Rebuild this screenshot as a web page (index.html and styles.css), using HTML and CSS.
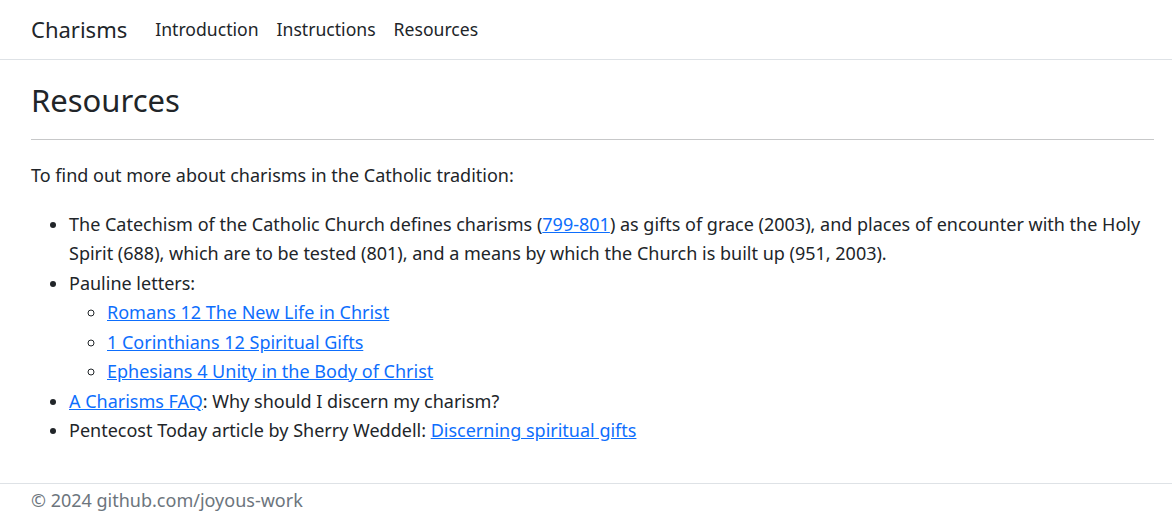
FILE: index.html
```html
<!DOCTYPE html>
<html lang="en">
<head>
<meta charset="utf-8">
<title>Charisms - Resources</title>
<link rel="stylesheet" href="styles.css">
</head>
<body>
<header class="navbar">
  <a class="brand" href="#">Charisms</a>
  <nav class="nav">
    <a class="nav-link" href="#">Introduction</a>
    <a class="nav-link" href="#">Instructions</a>
    <a class="nav-link" href="#">Resources</a>
  </nav>
</header>
<main class="content">
  <h1 class="title">Resources</h1>
  <hr class="rule">
  <p class="intro">To find out more about charisms in the Catholic tradition:</p>
  <ul class="list">
    <li>The Catechism of the Catholic Church defines charisms (<a href="#">799-801</a>) as gifts of grace (2003), and places of encounter with the Holy Spirit (688), which are to be tested (801), and a means by which the Church is built up (951, 2003).</li>
    <li>Pauline letters:
      <ul class="sublist">
        <li><a href="#">Romans 12 The New Life in Christ</a></li>
        <li><a href="#">1 Corinthians 12 Spiritual Gifts</a></li>
        <li><a href="#">Ephesians 4 Unity in the Body of Christ</a></li>
      </ul>
    </li>
    <li><a href="#">A Charisms FAQ</a>: Why should I discern my charism?</li>
    <li>Pentecost Today article by Sherry Weddell: <a href="#">Discerning spiritual gifts</a></li>
  </ul>
</main>
<footer class="footer">© 2024 github.com/joyous-work</footer>
</body>
</html>
```
FILE: styles.css
```css
html, body {
  margin: 0;
  padding: 0;
}
body {
  font-family: "Noto Sans", "Open Sans", sans-serif;
  font-size: 18px;
  line-height: 1.64;
  color: #212529;
  background: #fff;
}
a {
  color: #0d6efd;
}
.navbar {
  display: flex;
  align-items: center;
  height: 60px;
  box-sizing: border-box;
  border-bottom: 1px solid #dee2e6;
  padding: 0 31px;
}
.brand {
  font-size: 22px;
  color: #212529;
  text-decoration: none;
  margin-right: 28px;
}
.nav {
  display: flex;
  gap: 18px;
}
.nav-link {
  color: #212529;
  text-decoration: none;
  font-size: 17.6px;
}
.content {
  padding: 20px 18px 19px 31px;
}
.title {
  font-size: 31px;
  font-weight: 400;
  line-height: 41px;
  margin: 0 0 18px;
}
.rule {
  border: 0;
  border-top: 1px solid #c7c8c9;
  margin: 0 0 21px;
}
.intro {
  margin: 0 0 19px;
}
.list {
  margin: 0 0 18px;
  padding-left: 38px;
}
.sublist {
  margin: 0;
  padding-left: 38px;
  list-style-type: circle;
}
.footer {
  border-top: 1px solid #dee2e6;
  padding: 2px 31px;
  color: #6c757d;
  font-size: 18px;
}
```
